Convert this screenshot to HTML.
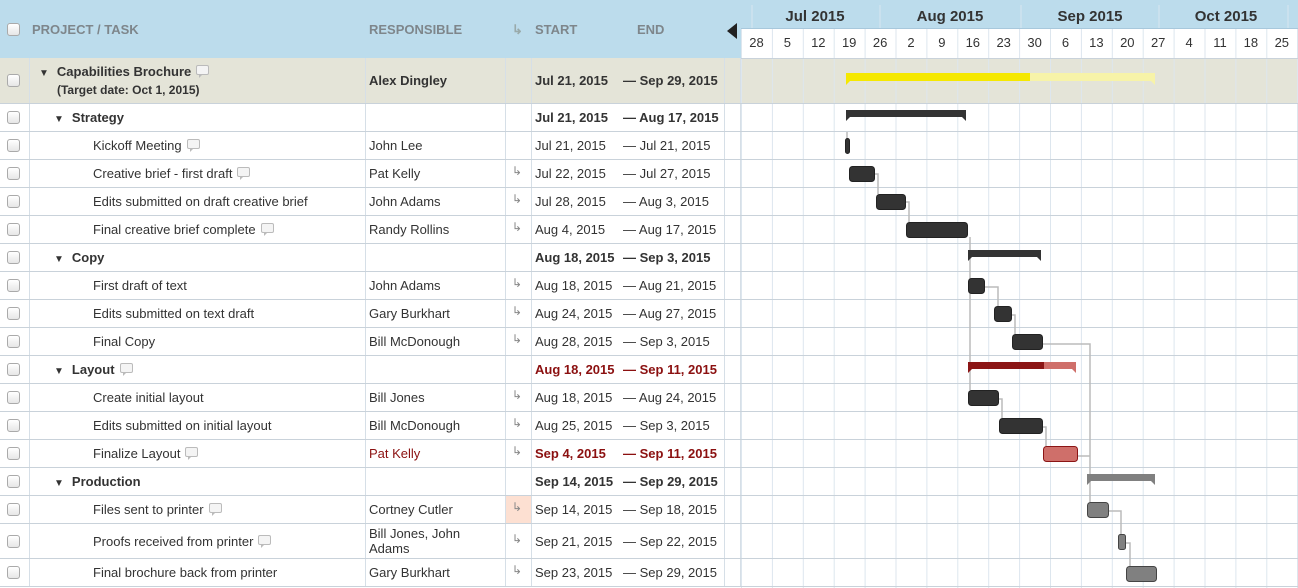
<!DOCTYPE html>
<html><head><meta charset="utf-8"><style>
*{box-sizing:border-box;margin:0;padding:0}
body{width:1298px;height:588px;overflow:hidden;background:#fff;font-family:"Liberation Sans",Arial,sans-serif;font-size:13px;color:#333;position:relative}
.hdr{position:absolute;left:0;top:0;width:1298px;height:58px;background:#bcdcec}
.h{position:absolute;top:22px;font-weight:bold;font-size:13px;color:#7e868b}
.cb{position:absolute;left:7px;width:13px;height:13px;border:1px solid #aaa;border-radius:3px;background:linear-gradient(#fff,#e6e6e6)}
.row{position:absolute;left:0;width:741px;border-bottom:1px solid #c9d2da}
.c{position:absolute;top:0;bottom:0;border-right:1px solid #d6dfe7}
.t{position:absolute;white-space:nowrap}
.b{font-weight:bold}
.red{color:#8b1010}
.arr{position:absolute;left:512px;color:#888;font-size:12px}
.bub{display:inline-block;width:13px;height:10px;border:1px solid #bbb;border-radius:2px;background:#f4f4f4;margin-left:5px;vertical-align:1px;position:relative}
.bub:after{content:"";position:absolute;left:2px;bottom:-4px;border-left:3px solid #bbb;border-bottom:3px solid transparent}
.tri{font-size:10px;margin-right:8px;color:#333}
</style></head><body>
<div class="hdr"></div>
<div class="cb" style="top:23px"></div>
<div class="h" style="left:32px">PROJECT / TASK</div>
<div class="h" style="left:369px">RESPONSIBLE</div>
<div class="h" style="left:512px;color:#9aa">↳</div>
<div class="h" style="left:535px">START</div>
<div class="h" style="left:637px">END</div>
<div style="position:absolute;left:727px;top:23px;border-right:10px solid #222;border-top:8px solid transparent;border-bottom:8px solid transparent"></div>

<svg width="1298" height="588" style="position:absolute;left:0;top:0">
<rect x="741" y="29" width="557" height="29" fill="#fff"/>
<g fill="#333" font-family="Liberation Sans,Arial,sans-serif" font-weight="bold" font-size="15" text-anchor="middle">
<text x="815" y="21">Jul 2015</text><text x="950" y="21">Aug 2015</text><text x="1090" y="21">Sep 2015</text><text x="1226" y="21">Oct 2015</text></g>
<g stroke="#d8e6ef"><line x1="752" y1="5" x2="752" y2="28"/><line x1="880" y1="5" x2="880" y2="28"/><line x1="1021" y1="5" x2="1021" y2="28"/><line x1="1159" y1="5" x2="1159" y2="28"/><line x1="1288" y1="5" x2="1288" y2="28"/></g>
<line x1="741" y1="28.5" x2="1298" y2="28.5" stroke="#a8c8dc"/>
<rect x="741" y="58" width="557" height="46" fill="#e4e4d8"/>
<g id="vg" stroke="#dde6ee"></g>
<g font-family="Liberation Sans,Arial,sans-serif" font-size="13" fill="#333" text-anchor="middle" id="wk"></g>
<g id="hg" stroke="#c9d2da"></g>
<g fill="none" stroke="#bbb" stroke-width="1.5">
<polyline points="847,132 847,152"/>
<polyline points="875,174 878,174 878,194"/>
<polyline points="906,202 909,202 909,222"/>
<polyline points="970,237 970,390"/>
<polyline points="985,287 998,287 998,306"/>
<polyline points="1012,315 1015,315 1015,334"/>
<polyline points="1043,344 1090,344 1090,502"/>
<polyline points="999,399 1002,399 1002,418"/>
<polyline points="1043,427 1046,427 1046,446"/>
<polyline points="1078,456 1090,456"/>
<polyline points="1109,511 1121,511 1121,534"/>
<polyline points="1126,543 1130,543 1130,566"/>
</g>
<rect x="846" y="73" width="184" height="8" fill="#f5e800"/><rect x="1030" y="73" width="125" height="8" fill="#f7f3a8"/>
<path d="M846 81h4l-4 4z" fill="#f5e800"/><path d="M1155 81h-4l4 4z" fill="#f7f3a8"/>
<g fill="#333"><path d="M846 110h120v11l-4-4h-112l-4 4z"/><path d="M968 250h73v11l-4-4h-65l-4 4z"/></g>
<path d="M968 362h76v7h-72l-4 4z" fill="#8b1515"/><path d="M1044 362h32v11l-4-4h-28z" fill="#cf6f6a"/>
<path d="M1087 474h68v11l-4-4h-60l-4 4z" fill="#808080"/>
<g fill="#333" stroke="#222">
<rect x="845.5" y="138.5" width="4" height="15" rx="2"/>
<rect x="849.5" y="166.5" width="25" height="15" rx="3"/>
<rect x="876.5" y="194.5" width="29" height="15" rx="3"/>
<rect x="906.5" y="222.5" width="61" height="15" rx="3"/>
<rect x="968.5" y="278.5" width="16" height="15" rx="3"/>
<rect x="994.5" y="306.5" width="17" height="15" rx="3"/>
<rect x="1012.5" y="334.5" width="30" height="15" rx="3"/>
<rect x="968.5" y="390.5" width="30" height="15" rx="3"/>
<rect x="999.5" y="418.5" width="43" height="15" rx="3"/>
</g>
<rect x="1043.5" y="446.5" width="34" height="15" rx="3" fill="#cf6f6a" stroke="#8b1515"/>
<g fill="#808080" stroke="#444">
<rect x="1087.5" y="502.5" width="21" height="15" rx="3"/>
<rect x="1118.5" y="534.5" width="7" height="15" rx="2"/>
<rect x="1126.5" y="566.5" width="30" height="15" rx="3"/>
</g>
</svg>

<div id="rows"></div>
<script>
var vg=document.getElementById('vg'),wk=document.getElementById('wk'),hg=document.getElementById('hg');
var labels=[28,5,12,19,26,2,9,16,23,30,6,13,20,27,4,11,18,25];
var s='',w='';
for(var i=0;i<18;i++){var x=741+i*30.9;s+='<line x1="'+(x+0.5)+'" y1="29" x2="'+(x+0.5)+'" y2="588"/>';w+='<text x="'+(x+15.5)+'" y="47">'+labels[i]+'</text>';}
s+='<line x1="1297.5" y1="29" x2="1297.5" y2="588"/>';
vg.innerHTML=s;wk.innerHTML=w;
var ys=[58,104,132,160,188,216,244,272,300,328,356,384,412,440,468,496,524,559,587],h='';
for(var j=1;j<ys.length;j++)h+='<line x1="741" y1="'+(ys[j]-0.5)+'" x2="1298" y2="'+(ys[j]-0.5)+'"/>';
h+='<line x1="741" y1="58.5" x2="1298" y2="58.5"/>';
hg.innerHTML=h;
var B='<span class="bub"></span>';
var R=[
[58,46,'p','','Alex Dingley',0,'Jul 21, 2015','— Sep 29, 2015'],
[104,28,'g','<span class="tri">▼</span>Strategy','',0,'Jul 21, 2015','— Aug 17, 2015'],
[132,28,'t','Kickoff Meeting'+B,'John Lee',0,'Jul 21, 2015','— Jul 21, 2015'],
[160,28,'t','Creative brief - first draft'+B,'Pat Kelly',1,'Jul 22, 2015','— Jul 27, 2015'],
[188,28,'t','Edits submitted on draft creative brief','John Adams',1,'Jul 28, 2015','— Aug 3, 2015'],
[216,28,'t','Final creative brief complete'+B,'Randy Rollins',1,'Aug 4, 2015','— Aug 17, 2015'],
[244,28,'g','<span class="tri">▼</span>Copy','',0,'Aug 18, 2015','— Sep 3, 2015'],
[272,28,'t','First draft of text','John Adams',1,'Aug 18, 2015','— Aug 21, 2015'],
[300,28,'t','Edits submitted on text draft','Gary Burkhart',1,'Aug 24, 2015','— Aug 27, 2015'],
[328,28,'t','Final Copy','Bill McDonough',1,'Aug 28, 2015','— Sep 3, 2015'],
[356,28,'gr','<span class="tri">▼</span>Layout'+B,'',0,'Aug 18, 2015','— Sep 11, 2015'],
[384,28,'t','Create initial layout','Bill Jones',1,'Aug 18, 2015','— Aug 24, 2015'],
[412,28,'t','Edits submitted on initial layout','Bill McDonough',1,'Aug 25, 2015','— Sep 3, 2015'],
[440,28,'tr','Finalize Layout'+B,'Pat Kelly',1,'Sep 4, 2015','— Sep 11, 2015'],
[468,28,'g','<span class="tri">▼</span>Production','',0,'Sep 14, 2015','— Sep 29, 2015'],
[496,28,'t','Files sent to printer'+B,'Cortney Cutler',2,'Sep 14, 2015','— Sep 18, 2015'],
[524,35,'t','Proofs received from printer'+B,'Bill Jones, John<br>Adams',1,'Sep 21, 2015','— Sep 22, 2015'],
[559,28,'t','Final brochure back from printer','Gary Burkhart',1,'Sep 23, 2015','— Sep 29, 2015']
];
var o='';
R.forEach(function(r){
 var y=r[0],hh=r[1],k=r[2],mid=Math.round(hh/2)-8;
 var bg=k=='p'?'#e4e4d8':'#fff';
 o+='<div class="row" style="top:'+y+'px;height:'+hh+'px;background:'+bg+'">';
 o+='<div class="c" style="left:0;width:30px"></div><div class="c" style="left:30px;width:336px"></div><div class="c" style="left:366px;width:140px"></div>';
 o+='<div class="c" style="left:506px;width:26px;'+(r[5]==2?'background:#fde0d2':'')+'"></div><div class="c" style="left:532px;width:193px"></div><div class="c" style="left:725px;width:16px"></div>';
 o+='<div class="cb" style="top:'+(Math.round(hh/2)-7)+'px"></div>';
 var tl=(k=='t'||k=='tr')?93:(k=='p'?39:54);
 var tc=(k=='t'||k=='tr')?'':' b';
 if(k=='p'){o+='<div class="t b" style="left:39px;top:6px"><span class="tri">▼</span>Capabilities Brochure'+B+'</div><div class="t b" style="left:57px;top:25px;font-size:12px">(Target date: Oct 1, 2015)</div>';}
 else o+='<div class="t'+tc+'" style="left:'+tl+'px;top:'+mid+'px">'+r[3]+'</div>';
 var rc=k=='tr'?' red':'',dc=(k=='tr'||k=='gr')?' red':'';
 if(r[4].indexOf('<br>')>0)o+='<div class="t" style="left:369px;top:2px;line-height:15px">'+r[4]+'</div>';
 else o+='<div class="t'+(k=='p'?' b':'')+rc+'" style="left:369px;top:'+mid+'px">'+r[4]+'</div>';
 if(r[5])o+='<div class="arr" style="top:'+(mid-2)+'px">↳</div>';
 var db=(k=='t'||k=='tr')?(k=='tr'?' b':''):' b';
 o+='<div class="t'+db+dc+'" style="left:535px;top:'+mid+'px">'+r[6]+'</div><div class="t'+db+dc+'" style="left:623px;top:'+mid+'px">'+r[7]+'</div>';
 o+='</div>';
});
document.getElementById('rows').innerHTML=o;
</script>
</body></html>
